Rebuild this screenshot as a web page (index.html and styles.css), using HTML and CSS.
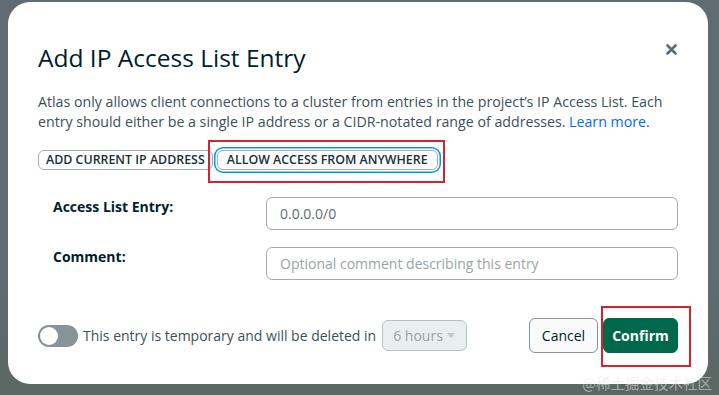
FILE: index.html
```html
<!DOCTYPE html>
<html>
<head>
<meta charset="utf-8">
<link rel="stylesheet" href="styles.css">
</head>
<body>
<div class="page">
  <div class="modal">
    <div class="header">
      <h1 class="title">Add IP Access List Entry</h1>
      <span class="close">
        <svg width="11" height="11" viewBox="0 0 11 11"><path d="M1.5 1.5 L9.5 9.5 M9.5 1.5 L1.5 9.5" stroke="#5c6c75" stroke-width="2.6" stroke-linecap="round"/></svg>
      </span>
    </div>
    <p class="desc">Atlas only allows client connections to a cluster from entries in the project’s IP Access List. Each entry should either be a single IP address or a CIDR-notated range of addresses. <a class="link">Learn more</a>.</p>
    <div class="quick">
      <button class="chip">ADD CURRENT IP ADDRESS</button>
      <span class="mark mark-allow"><button class="chip chip-focus">ALLOW ACCESS FROM ANYWHERE</button></span>
    </div>
    <div class="form">
      <div class="row">
        <label class="label">Access List Entry:</label>
        <div class="input">0.0.0.0/0</div>
      </div>
      <div class="row">
        <label class="label">Comment:</label>
        <div class="input placeholder">Optional comment describing this entry</div>
      </div>
    </div>
    <div class="footer">
      <div class="temp">
        <span class="toggle"><span class="knob"></span></span>
        <span class="temp-text">This entry is temporary and will be deleted in</span>
        <span class="select">6 hours<span class="caret"></span></span>
      </div>
      <div class="actions">
        <button class="btn btn-cancel">Cancel</button>
        <span class="mark mark-confirm"><button class="btn btn-confirm">Confirm</button></span>
      </div>
    </div>
  </div>
  <div class="watermark">@稀土掘金技术社区</div>
</div>
</body>
</html>
```

FILE: styles.css
```css
* { box-sizing: border-box; }
html, body { margin: 0; padding: 0; }
body {
  width: 719px;
  height: 395px;
  overflow: hidden;
  background: #5e6b70;
  font-family: "Open Sans", "Noto Sans", sans-serif;
}
.page {
  position: relative;
  width: 719px;
  height: 395px;
  padding: 2px 0 0 8px;
  background: linear-gradient(180deg, #5f6c71 0%, #5f6c71 70%, #5b6762 100%);
}
.modal {
  width: 700px;
  height: 382px;
  background: #fff;
  border-radius: 22px;
  padding: 0 30px 0 30px;
}
.header {
  display: flex;
  justify-content: space-between;
  align-items: flex-start;
  padding-top: 41px;
}
.title {
  margin: 0;
  font-weight: 400;
  font-size: 24.5px;
  line-height: 30px;
  color: #001e2b;
}
.close {
  display: flex;
  margin-top: 1px;
  margin-right: 1px;
}
.desc {
  margin: 19px 0 0 0;
  font-size: 14.2px;
  line-height: 20px;
  color: #3d4f58;
  width: 636px;
}
.link { color: #016bf8; }
.quick {
  display: flex;
  gap: 4px;
  margin-top: 18px;
  align-items: center;
}
.chip {
  font-family: "Open Sans", "Noto Sans", sans-serif;
  font-size: 12.4px;
  font-weight: 600;
  color: #1c2d38;
  background: #fff;
  border: 1px solid #a3acb0;
  border-radius: 6px;
  height: 20px;
  padding: 0 7px;
  line-height: 18px;
  letter-spacing: 0;
}
.chip-focus {
  box-shadow: 0 0 0 1.5px #fff, 0 0 0 3px #0498ec;
  padding: 0 9px;
}
.mark { position: relative; display: inline-flex; }
.mark::after {
  content: "";
  position: absolute;
  border: 2px solid #d6222c;
  pointer-events: none;
}
.mark-allow::after { left: -9px; right: -7px; top: -10px; bottom: -13px; }
.mark-confirm::after { left: -2px; right: -13px; top: -12px; bottom: -14px; }
.form {
  margin-top: 27px;
  display: flex;
  flex-direction: column;
  gap: 17px;
}
.row {
  display: flex;
  align-items: flex-start;
}
.label {
  width: 228px;
  padding-left: 15px;
  font-size: 14px;
  font-weight: 700;
  color: #001e2b;
  line-height: 20px;
  padding-top: 0;
}
.input {
  width: 412px;
  height: 33px;
  border: 1px solid #a3acb0;
  border-radius: 6px;
  padding: 0 13px;
  font-size: 14px;
  line-height: 31px;
  color: #5c6c75;
}
.placeholder { color: #9aa3a8; }
.footer {
  margin-top: 38px;
  display: flex;
  justify-content: space-between;
  align-items: center;
}
.temp {
  display: flex;
  align-items: center;
}
.toggle {
  width: 40px;
  height: 22px;
  border-radius: 11px;
  background: #889397;
  padding: 2px;
  display: flex;
}
.knob {
  width: 18px;
  height: 18px;
  border-radius: 50%;
  background: #fff;
}
.temp-text {
  margin-left: 5px;
  font-size: 14px;
  color: #3d4f58;
}
.select {
  margin-left: 6px;
  width: 85px;
  height: 31px;
  border: 1px solid #b8c4c2;
  border-radius: 6px;
  background: #e9eeee;
  color: #9aa3a8;
  font-size: 14px;
  display: flex;
  align-items: center;
  padding-left: 10px;
  position: relative;
}
.caret {
  position: absolute;
  right: 11px;
  top: 12px;
  width: 0;
  height: 0;
  border-left: 4px solid transparent;
  border-right: 4px solid transparent;
  border-top: 5px solid #c1c7c6;
}
.actions {
  display: flex;
  gap: 5px;
  align-items: center;
}
.btn {
  font-family: "Open Sans", "Noto Sans", sans-serif;
  height: 35px;
  border-radius: 6px;
  font-size: 14px;
  padding: 0;
}
.btn-cancel {
  width: 69px;
  background: #f9fbfa;
  border: 1px solid #889397;
  color: #001e2b;
}
.btn-confirm {
  width: 75px;
  background: #00684a;
  border: 1px solid #00684a;
  color: #fff;
  font-weight: 700;
}
.watermark {
  position: absolute;
  right: 7px;
  bottom: 2px;
  font-family: "Noto Sans CJK SC", sans-serif;
  font-size: 14.5px;
  color: rgba(230, 230, 230, 0.55);
  letter-spacing: 0;
}
```
